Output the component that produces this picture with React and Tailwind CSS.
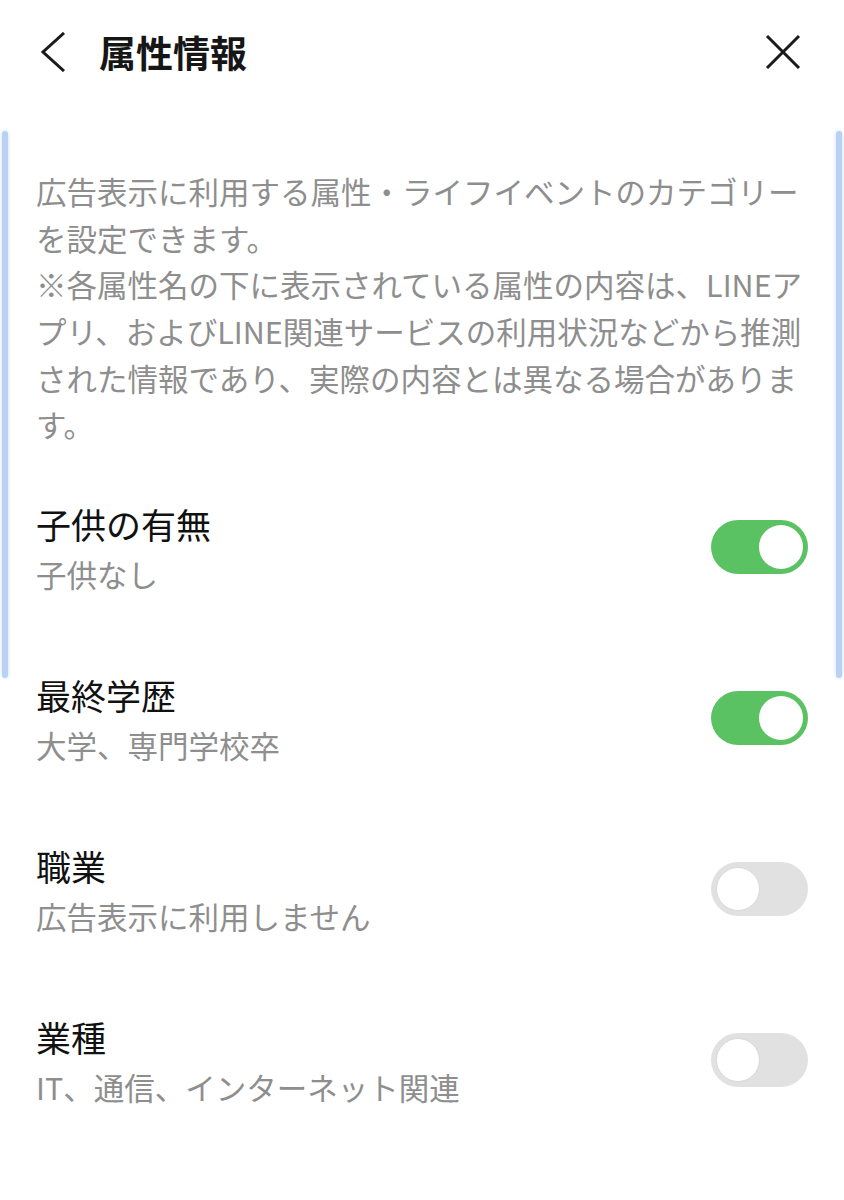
import React, { useState } from 'react';

const FONT = { fontFamily: '"Noto Sans CJK JP", "Noto Sans", sans-serif' };

const attributes = [
  { id: 'children', title: '子供の有無', value: '子供なし', on: true },
  { id: 'education', title: '最終学歴', value: '大学、専門学校卒', on: true },
  { id: 'job', title: '職業', value: '広告表示に利用しません', on: false },
  { id: 'industry', title: '業種', value: 'IT、通信、インターネット関連', on: false },
];

// Simple iOS-like switch
const Toggle = ({ checked, onChange }) => (
  <button
    type="button"
    onClick={onChange}
    className={`relative flex h-[54px] w-[97px] shrink-0 items-center rounded-full px-[5px] ${
      checked ? 'justify-end bg-[#5bc263]' : 'justify-start bg-[#e1e1e1]'
    }`}
  >
    <span
      className={`block h-[44px] w-[44px] rounded-full bg-white ${
        checked ? '' : 'border border-[#d9d9d9]'
      }`}
    />
  </button>
);

const App = () => {
  const [items, setItems] = useState(attributes);

  const handleToggle = (id) => {
    setItems((prev) => prev.map((it) => (it.id === id ? { ...it, on: !it.on } : it)));
  };

  return (
    <div className="relative min-h-[1200px] w-full overflow-hidden bg-white" style={FONT}>
      {/* Header */}
      <div className="flex h-[104px] items-center justify-between pl-[40px] pr-[43px]">
        <div className="flex items-center gap-[33px]">
          <svg width="26" height="40" viewBox="0 0 26 40" fill="none">
            <path d="M24 1 L3 20 L24 39" stroke="#1a1a1a" strokeWidth="3" strokeLinejoin="miter" />
          </svg>
          <h1 className="text-[37px] font-bold leading-[48px] text-[#161616]">属性情報</h1>
        </div>
        <svg width="36" height="36" viewBox="0 0 36 36" fill="none">
          <path d="M2 2 L34 34 M34 2 L2 34" stroke="#1a1a1a" strokeWidth="3" />
        </svg>
      </div>

      {/* Description */}
      <p className="mt-[64px] whitespace-nowrap pl-[36px] text-[30.5px] leading-[46.67px] text-[#8e8e8e]">
        広告表示に利用する属性・ライフイベントのカテゴリー
        <br />
        を設定できます。
        <br />
        ※各属性名の下に表示されている属性の内容は、LINEア
        <br />
        プリ、およびLINE関連サービスの利用状況などから推測
        <br />
        された情報であり、実際の内容とは異なる場合がありま
        <br />
        す。
      </p>

      {/* Attribute list */}
      <div className="mt-[52px] flex flex-col gap-[71px] pl-[36px] pr-[36px]">
        {items.map((item) => (
          <div key={item.id} className="flex items-start justify-between">
            <div className="flex flex-col">
              <span className="text-[35px] leading-[48px] text-[#111]">{item.title}</span>
              <span className="text-[30.5px] leading-[52px] text-[#8e8e8e]">{item.value}</span>
            </div>
            <div className="mt-[20px]">
              <Toggle checked={item.on} onChange={() => handleToggle(item.id)} />
            </div>
          </div>
        ))}
      </div>

      {/* Scroll edge glow */}
      <div className="pointer-events-none absolute left-[2px] top-[131px] h-[547px] w-[6px] rounded-full bg-[#b7d2f4] shadow-[0_0_4px_#cfe0f8]" />
      <div className="pointer-events-none absolute right-[2px] top-[131px] h-[547px] w-[6px] rounded-full bg-[#b7d2f4] shadow-[0_0_4px_#cfe0f8]" />
    </div>
  );
};

export default App;
